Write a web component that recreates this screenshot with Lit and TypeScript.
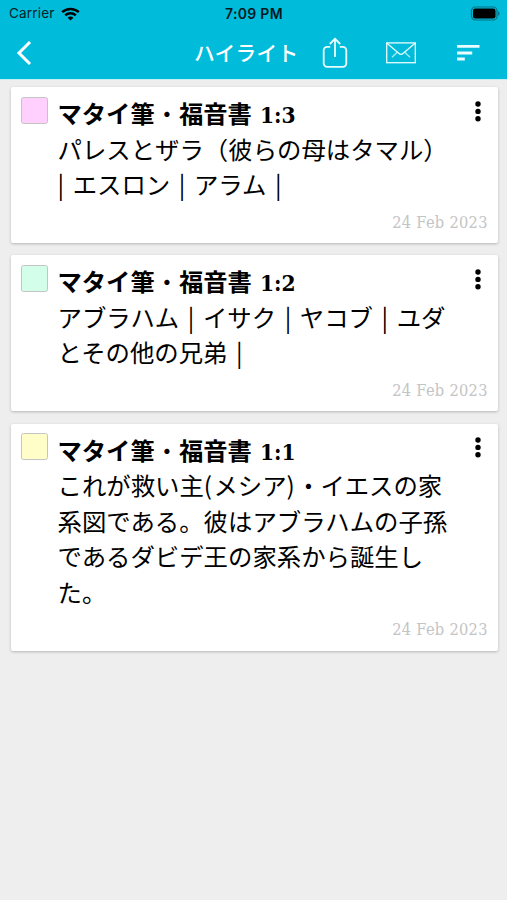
import { LitElement, html, css } from "lit";
import { customElement, property } from "lit/decorators.js";

interface Highlight {
  book: string[];
  verse: string;
  lines: string[];
  date: string;
  color: string;
}

const HIGHLIGHTS: Highlight[] = [
  {
    book: ["マタイ筆", "福音書"],
    verse: "1:3",
    lines: ["パレスとザラ（彼らの母はタマル）", "| エスロン | アラム |"],
    date: "24 Feb 2023",
    color: "#ffd0fe",
  },
  {
    book: ["マタイ筆", "福音書"],
    verse: "1:2",
    lines: ["アブラハム | イサク | ヤコブ | ユダ", "とその他の兄弟 |"],
    date: "24 Feb 2023",
    color: "#d3feea",
  },
  {
    book: ["マタイ筆", "福音書"],
    verse: "1:1",
    lines: [
      "これが救い主(メシア)・イエスの家",
      "系図である。彼はアブラハムの子孫",
      "であるダビデ王の家系から誕生し",
      "た。",
    ],
    date: "24 Feb 2023",
    color: "#fffec8",
  },
];

@customElement("status-bar")
class StatusBar extends LitElement {
  static styles = css`
    :host {
      display: grid;
      grid-template-columns: 1fr auto 1fr;
      align-items: center;
      height: 27px;
      padding: 0 7px 0 9px;
      font: 500 13.3px/27px Inter, "Noto Sans", sans-serif;
      color: #06222a;
    }
    .left {
      display: flex;
      align-items: center;
      gap: 6px;
      font-weight: 400;
      font-size: 13.6px;
      letter-spacing: 0.15px;
    }
    .time {
      font-weight: 600;
      font-size: 14px;
      letter-spacing: 0.3px;
      margin-right: 1px;
      color: #04191f;
    }
    .battery {
      justify-self: end;
    }
    svg {
      display: block;
    }
  `;
  render() {
    return html`
      <div class="left">
        <span>Carrier</span>
        <svg width="19" height="14" viewBox="0 0 19 14" fill="none" stroke="#000" stroke-width="2.5">
          <path d="M1.2 5.2C5.9.8 13.1.8 17.8 5.2" />
          <path d="M4.2 8.4C7.2 5.6 11.8 5.6 14.8 8.4" />
          <path d="M9.5 13.6L6.6 10.7C8.2 9.2 10.8 9.2 12.4 10.7Z" fill="#000" stroke="none" />
        </svg>
      </div>
      <span class="time">7:09 PM</span>
      <svg class="battery" width="30" height="15" viewBox="0 0 30 15">
        <rect x="1.5" y="1" width="25.5" height="13" rx="3.8" fill="none" stroke="#087182" stroke-width="1.2" />
        <rect x="3" y="2.5" width="22.5" height="10" rx="2.3" />
        <path d="M28 5.2c2 .8 2 3.8 0 4.6z" fill="#087182" />
      </svg>
    `;
  }
}

@customElement("nav-bar")
class NavBar extends LitElement {
  static styles = css`
    :host {
      display: flex;
      align-items: center;
      height: 51px;
      padding: 0 27.5px 0 16px;
      box-sizing: border-box;
      color: #fff;
    }
    svg {
      display: block;
      flex: none;
      fill: none;
      stroke: #e9fdff;
    }
    .title {
      flex: 1;
      text-align: right;
      font: 500 20.7px/48px "Noto Sans CJK JP", sans-serif;
      letter-spacing: 0.3px;
      margin-top: -2px;
    }
    .share {
      margin-left: 23px;
    }
    .mail {
      margin-left: 38.5px;
    }
    .sort {
      margin-left: 39.5px;
    }
  `;
  render() {
    return html`
      <svg width="16" height="26" viewBox="0 0 16 26" stroke-width="3">
        <path d="M14 2L3 13l11 11" stroke="#fff" />
      </svg>
      <span class="title">ハイライト</span>
      <svg class="share" width="26" height="32" viewBox="0 0 26 32" stroke-width="1.8">
        <path d="M8.2 9.8H5.2a3.5 3.5 0 0 0-3.5 3.5v13a3.5 3.5 0 0 0 3.5 3.5h15.6a3.5 3.5 0 0 0 3.5-3.5v-13a3.5 3.5 0 0 0-3.5-3.5h-3M13 20V2M7.8 7L13 1.8 18.2 7" />
      </svg>
      <svg class="mail" width="30" height="22" viewBox="0 0 30 22" stroke-width="1.3">
        <rect x="0.7" y="0.9" width="28.6" height="19.8" />
        <path d="M1 1.2l12 10.4q2 1.7 4 0L29 1.2" />
        <path d="M6 15.2l5.2-5M24 15.2l-5.2-5" opacity="0.7" />
      </svg>
      <svg class="sort" width="24" height="18" viewBox="0 0 24 18" stroke-width="2.8">
        <path d="M1 2.4h22.5M1 9h15.2M1 15h7.8" />
      </svg>
    `;
  }
}

@customElement("highlight-card")
class HighlightCard extends LitElement {
  @property({ attribute: false }) item!: Highlight;

  static styles = css`
    :host {
      display: grid;
      grid-template-columns: 27px 1fr 8px;
      column-gap: 10px;
      padding: 8px 16px 9.5px 9.5px;
      background: #fff;
      border-radius: 2px;
      box-shadow: 0 1px 3px rgba(0, 0, 0, 0.24);
      color: #000;
    }
    .swatch {
      box-sizing: border-box;
      width: 27px;
      height: 27px;
      margin-top: 1.5px;
      border: 1px solid #c4c4c4;
      border-radius: 2.5px;
    }
    .text {
      font: 400 24.4px/35.5px "Noto Sans CJK JP", sans-serif;
      white-space: nowrap;
    }
    .title {
      font-weight: 700;
      font-size: 24.3px;
    }
    .dot {
      font-weight: 400;
    }
    .verse {
      font: 700 22.5px/30px "DejaVu Serif Condensed", "DejaVu Serif", serif;
      font-stretch: condensed;
      margin-left: 8px;
    }
    .body {
      word-spacing: 3.1px;
    }
    .paren {
      letter-spacing: 1.3px;
    }
    .menu {
      margin-top: 5.5px;
    }
    .date {
      grid-column: 1 / -1;
      justify-self: end;
      margin-right: -6.3px;
      margin-top: 10px;
      font: 400 16.3px/22px "DejaVu Serif Condensed", "DejaVu Serif", serif;
      font-stretch: condensed;
      letter-spacing: 0.28px;
      color: #c4c4c4;
    }
  `;

  private renderLine(line: string) {
    return line
      .split(/([()])/)
      .map((part) => (part === "(" || part === ")" ? html`<span class="paren">${part}</span>` : part));
  }

  render() {
    const { book, verse, lines, date, color } = this.item;
    return html`
      <div class="swatch" style="background:${color}"></div>
      <div class="text">
        <div class="title">${book[0]}<span class="dot">・</span>${book[1]}<span class="verse">${verse}</span></div>
        <div class="body">${lines.map((line) => html`<div>${this.renderLine(line)}</div>`)}</div>
      </div>
      <svg class="menu" width="8" height="22" viewBox="0 0 8 22">
        <circle cx="4" cy="3" r="2.7" />
        <circle cx="4" cy="10.4" r="2.7" />
        <circle cx="4" cy="17.8" r="2.7" />
      </svg>
      <div class="date">${date}</div>
    `;
  }
}

@customElement("app-root")
class AppRoot extends LitElement {
  static styles = css`
    :host {
      display: flex;
      flex-direction: column;
      height: 900px;
      background: #eeeeee;
    }
    .header {
      flex: none;
      height: 79px;
      background: #00bcda;
      border-bottom: 1px solid #c5edf4;
      box-sizing: content-box;
    }
    .list {
      display: flex;
      flex-direction: column;
      gap: 12.3px;
      padding: 7px 9.5px 0 11px;
    }
  `;
  render() {
    return html`
      <header class="header">
        <status-bar></status-bar>
        <nav-bar></nav-bar>
      </header>
      <main class="list">
        ${HIGHLIGHTS.map((item) => html`<highlight-card .item=${item}></highlight-card>`)}
      </main>
    `;
  }
}
